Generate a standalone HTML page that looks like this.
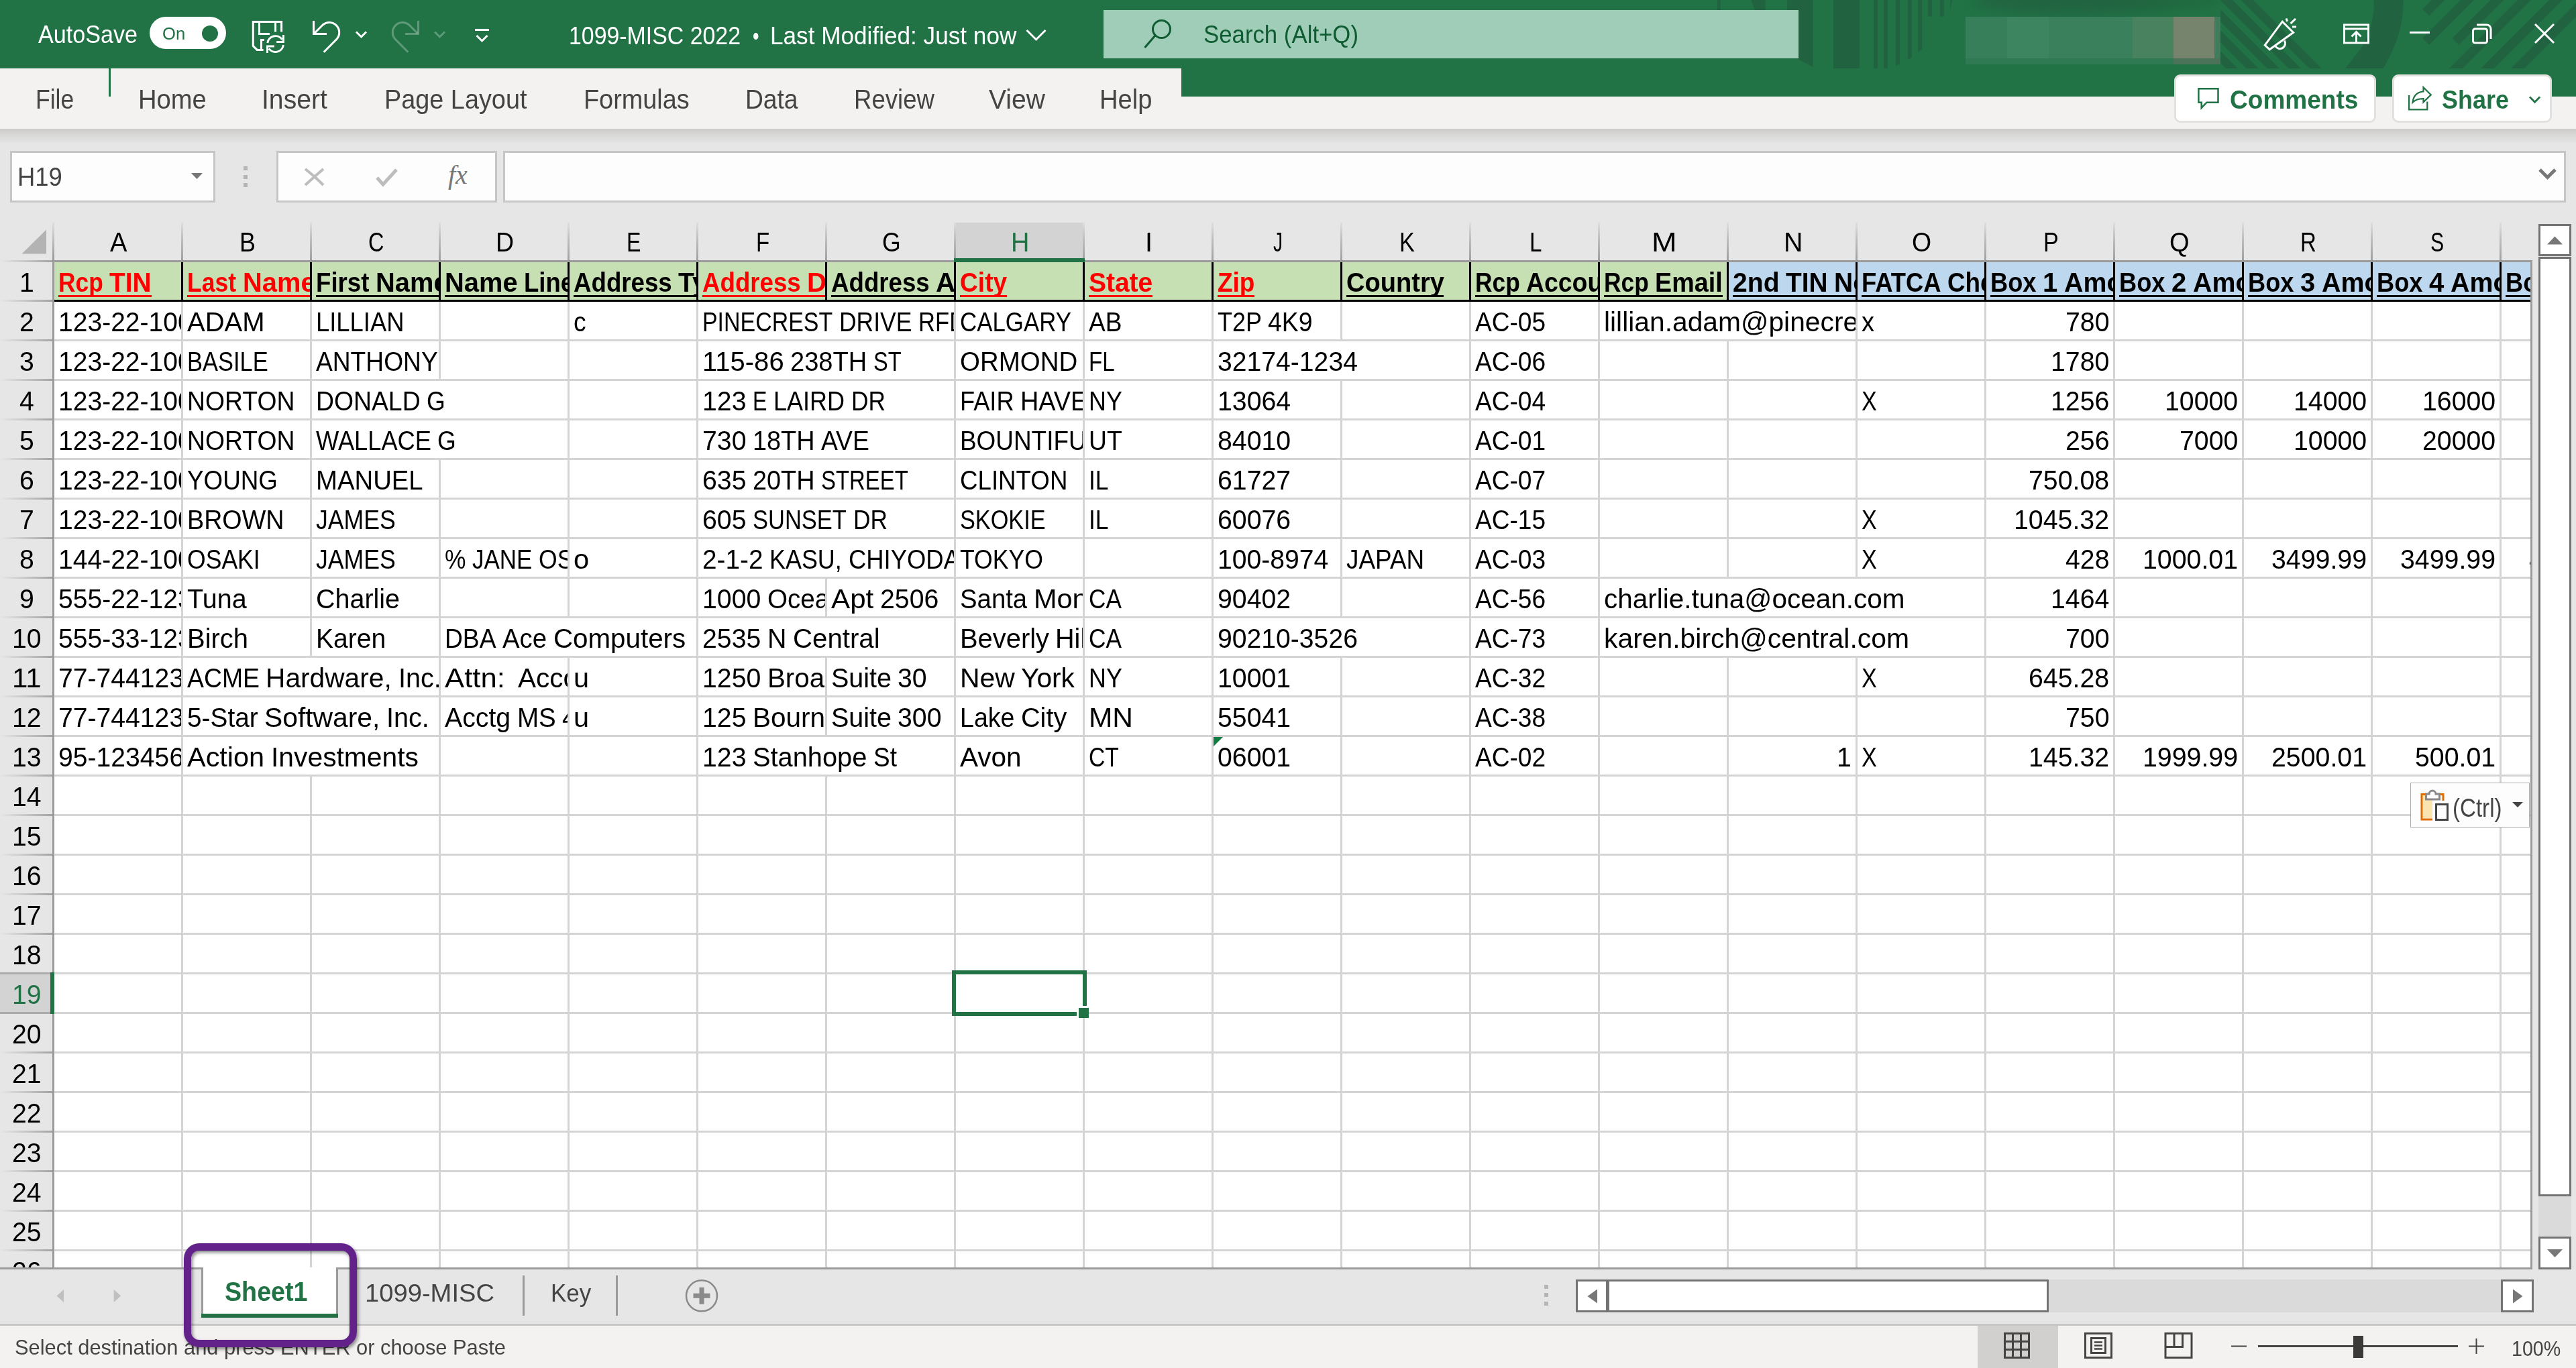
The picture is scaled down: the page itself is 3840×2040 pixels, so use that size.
<!DOCTYPE html>
<html><head><meta charset="utf-8"><title>Excel</title>
<style>
html,body{margin:0;padding:0;}
body{width:3840px;height:2040px;overflow:hidden;position:relative;background:#e6e6e6;font-family:"Liberation Sans",sans-serif;}
div,span,svg{position:absolute;box-sizing:border-box;}
.t{white-space:pre;line-height:1;transform-origin:0 0;display:block;}
.c{overflow:hidden;}
.u{text-decoration:underline;text-decoration-thickness:3px;text-underline-offset:5px;text-decoration-skip-ink:none;}
</style></head><body>

<div style="left:0px;top:0px;width:3840px;height:102px;background:#217346;"></div>
<div style="left:1761px;top:102px;width:2079px;height:42px;background:#217346;"></div>
<div style="left:0px;top:102px;width:1761px;height:90px;background:#f3f2f1;"></div>
<div style="left:1761px;top:144px;width:2079px;height:48px;background:#f3f2f1;"></div>
<div style="left:0px;top:192px;width:3840px;height:23px;background:linear-gradient(#cccbca,#d8d8d7 40%,#e6e6e6);"></div>
<div style="left:2940px;top:-22px;width:300px;height:44px;background:#216140;filter:blur(10px);border-radius:50%;opacity:.8"></div>
<div style="left:3180px;top:-18px;width:130px;height:34px;background:#21673f;filter:blur(9px);border-radius:50%;opacity:.7"></div>
<svg style="left:0;top:0" width="3840" height="102" viewBox="0 0 3840 102">
<g fill="#216341">
<rect x="2560" y="0" width="4.7" height="15"/>
<polygon points="2610.2,0 2631.5,0 2631.5,15 2616,15"/>
<polygon points="2664.2,0 2702.6,0 2702.6,100 2681,88.6 2681,15 2664.2,15"/>
<rect x="2733" y="0" width="39" height="102"/>
<rect x="2793" y="0" width="6" height="102"/><rect x="2808" y="0" width="6" height="102"/>
<polygon points="2826,0 2832,0 2832,95 2826,98.6"/>
<polygon points="2844,0 2850,0 2850,85.5 2844,89"/>
<polygon points="2859,0 2865,0 2865,73.5 2859,78"/>
<rect x="2874" y="0" width="6" height="24.5"/><rect x="2892" y="0" width="6" height="24.5"/>
<polygon points="2907,0 2910,0 2907,17"/>
</g>
<clipPath id="cpa"><rect x="3310" y="0" width="530" height="102"/></clipPath>
<g clip-path="url(#cpa)" stroke="#216341" fill="none">
<path d="M3315.8,122 L3173.8,-20" stroke-width="12.7"/>
<path d="M3346.8,122 L3204.8,-20" stroke-width="12.7"/>
<path d="M3377.7,122 L3235.7,-20" stroke-width="12.7"/>
<path d="M3408.7,122 L3266.7,-20" stroke-width="12.7"/>
<path d="M3440.7,122 L3298.7,-20" stroke-width="12.7"/>
<path d="M3471.6,122 L3329.6,-20" stroke-width="12.7"/>
<path d="M3538.7,0 Q3540,36 3520.6,70.5 L3496,102 L3552.6,102 Q3584,50 3582.5,0 Z" fill="#216341" stroke="none"/>
<path d="M3616,18.6 L3656,-21.4" stroke-width="14.1"/>
<path d="M3616,62 L3698,-20" stroke-width="14.1"/>
<path d="M3660.4,62 L3742.4,-20" stroke-width="14.1"/>
<path d="M3640.9,122 L3782.9,-20" stroke-width="14.1"/>
<path d="M3687.9,122 L3829.9,-20" stroke-width="14.1"/>
<path d="M3733,122 L3875,-20" stroke-width="14.1"/>
</g></svg>
<div style="left:2930px;top:25px;width:380px;height:71px;background:#2e7a54;"></div>
<div style="left:2930px;top:25px;width:62px;height:62px;background:#377f5a;"></div>
<div style="left:2992px;top:25px;width:62.4px;height:62px;background:#3d8560;"></div>
<div style="left:3054.4px;top:25px;width:124.2px;height:62px;background:#3b805c;"></div>
<div style="left:3178.6px;top:25px;width:61.4px;height:62px;background:#48825f;"></div>
<div style="left:2930px;top:87px;width:310px;height:9px;background:#2f7a53;"></div>
<div style="left:3240px;top:25px;width:61px;height:71px;background:#76836d;"></div>
<div style="left:3301px;top:25px;width:9px;height:71px;background:#3f7d5c;"></div>
<div style="left:3240px;top:87px;width:70px;height:9px;background:#4a735a;"></div>
<span class="t" style="left:57.00px;top:33.41px;font-size:37.79px;color:#fff;transform:scaleX(0.9032);">AutoSave</span>
<div style="left:223px;top:25px;width:114px;height:48px;background:#fff;border-radius:24px;"></div>
<div style="left:301px;top:37.5px;width:24px;height:24px;background:#217346;border-radius:12px;"></div>
<span class="t" style="left:241.80px;top:37.45px;font-size:26.16px;color:#217346;transform:scaleX(0.9799);">On</span>
<span class="t" style="left:848.30px;top:35.10px;font-size:37.21px;color:#fff;transform:scaleX(0.9101);">1099-MISC 2022</span>
<span class="t" style="left:1121.50px;top:35.10px;font-size:37.21px;color:#fff;transform:scaleX(0.7295);">•</span>
<span class="t" style="left:1147.50px;top:35.10px;font-size:37.21px;color:#fff;transform:scaleX(0.9449);">Last Modified: Just now</span>
<div style="left:1645px;top:15px;width:1036px;height:72px;background:#9fcdb7;"></div>
<span class="t" style="left:1794.30px;top:33.23px;font-size:37.06px;color:#0f5c32;transform:scaleX(0.9389);">Search (Alt+Q)</span>
<svg style="left:0;top:0" width="3840" height="220" viewBox="0 0 3840 220" fill="none" stroke="#fff" stroke-width="3">
<path d="M419.6,47.6 V32.5 H377.3 V68.6 L383.3,74.4 H392.6"/><path d="M410.6,32.5 V47.6"/><path d="M386.5,32.5 V50.4 H402"/><path d="M393.9,59.4 H389.5 V74.4"/>
<path d="M398.8,64 A11.9,11.9 0 0 1 420.4,58.8"/><path d="M422.4,67 A11.9,11.9 0 0 1 400.8,72.3"/><path d="M422.4,52 V62.4 H412.2"/><path d="M398.5,79 V68.9 H409"/>
<path d="M467.5,31 V50.4 H487"/><path d="M468.5,49.7 L481.2,37 A14.9,14.9 0 0 1 502.2,58 L482.7,77.8"/>
<path d="M531,47.5 L538.5,55 L546,47.5"/>
<g stroke="rgba(255,255,255,.28)"><path d="M623.5,31 V50.4 H604"/><path d="M622.5,49.7 L609.8,37 A14.9,14.9 0 0 0 588.8,58 L608.3,77.8"/><path d="M648,47.5 L655.5,55 L663,47.5"/></g>
<path d="M708,44.5 H729"/><path d="M710.5,53 L718.5,61 L726.5,53"/>
<path d="M1530.5,45 L1544.5,59 L1558.5,45"/>
<g stroke="#0f5c32"><circle cx="1731.5" cy="43.5" r="13"/><path d="M1722,53 L1706.5,71"/></g>
<path d="M3376.2,67.3 L3402.3,32.2 L3418.6,48.5 L3383.3,73.8 Z"/><path d="M3405.3,60.5 A7.6,7.6 0 0 1 3392,69"/><path d="M3408,27.5 L3409.6,32"/><path d="M3414.5,35.2 L3422,28"/><path d="M3417,40 L3423,40"/>
<rect x="3494.5" y="37" width="36" height="27"/><path d="M3494,43 H3531"/><path d="M3512.5,63 V48"/><path d="M3505.5,54.5 L3512.5,47.5 L3519.5,54.5"/>
<path d="M3592,48.5 H3622"/>
<rect x="3686.5" y="43" width="21" height="21" rx="3"/><path d="M3692,37 H3707 A6,6 0 0 1 3713,43 V58"/>
<path d="M3779,36 L3807,64 M3807,36 L3779,64"/>
</svg>
<span class="t" style="left:52.70px;top:128.05px;font-size:40.70px;color:#444;transform:scaleX(0.8740);">File</span>
<span class="t" style="left:205.60px;top:128.05px;font-size:40.70px;color:#444;transform:scaleX(0.9385);">Home</span>
<span class="t" style="left:390.30px;top:128.05px;font-size:40.70px;color:#444;transform:scaleX(0.9618);">Insert</span>
<span class="t" style="left:573.00px;top:128.05px;font-size:40.70px;color:#444;transform:scaleX(0.9297);">Page Layout</span>
<span class="t" style="left:870.00px;top:128.05px;font-size:40.70px;color:#444;transform:scaleX(0.9303);">Formulas</span>
<span class="t" style="left:1111.00px;top:128.05px;font-size:40.70px;color:#444;transform:scaleX(0.9140);">Data</span>
<span class="t" style="left:1273.00px;top:128.05px;font-size:40.70px;color:#444;transform:scaleX(0.8984);">Review</span>
<span class="t" style="left:1474.00px;top:128.05px;font-size:40.70px;color:#444;transform:scaleX(0.9591);">View</span>
<span class="t" style="left:1639.00px;top:128.05px;font-size:40.70px;color:#444;transform:scaleX(0.9389);">Help</span>
<div style="left:162px;top:102px;width:3px;height:42px;background:#217346;"></div>
<div style="left:3240.5px;top:111px;width:301.5px;height:72px;background:#fff;border:3px solid #e3e1df;border-radius:9px;"></div>
<div style="left:3566px;top:111px;width:237.5px;height:72px;background:#fff;border:3px solid #e3e1df;border-radius:9px;"></div>
<span class="t" style="left:3323.50px;top:130.07px;font-size:38.66px;color:#217346;transform:scaleX(0.9584);font-weight:bold;">Comments</span>
<span class="t" style="left:3639.50px;top:130.07px;font-size:38.66px;color:#217346;transform:scaleX(0.9298);font-weight:bold;">Share</span>
<svg style="left:0;top:0" width="3840" height="220" viewBox="0 0 3840 220" fill="none" stroke="#217346" stroke-width="2.5">
<path d="M3277.4,132.2 H3306.5 V152.7 H3289.5 L3281.7,160.8 V152.7 H3277.4 Z"/>
<path d="M3591.1,142 V163.4 H3618.3 V151.5" stroke-width="2.3"/>
<path d="M3596.5,152.8 Q3598,138 3612.5,136.4 V130.1 L3623.8,141.4 L3612.5,152.3 V147.1 Q3602,147 3596.5,152.8 Z" stroke-width="2.2"/>
<path d="M3771,144.5 L3778.6,152.2 L3786.2,144.5" stroke-width="2.8"/>
</svg>
<div style="left:15px;top:225px;width:306px;height:77px;background:#fdfdfd;border:3px solid #c6c6c6;"></div>
<span class="t" style="left:26.40px;top:245.12px;font-size:38.37px;color:#444;transform:scaleX(0.9492);">H19</span>
<div style="left:411.5px;top:225px;width:329.5px;height:77px;background:#fdfdfd;border:3px solid #c6c6c6;"></div>
<div style="left:750px;top:225px;width:3075px;height:77px;background:#fdfdfd;border:3px solid #c6c6c6;"></div>
<div style="left:363px;top:248px;width:6px;height:6px;background:#b5b5b5;"></div>
<div style="left:363px;top:260.5px;width:6px;height:6px;background:#b5b5b5;"></div>
<div style="left:363px;top:272.5px;width:6px;height:6px;background:#b5b5b5;"></div>
<svg style="left:0;top:200" width="3840" height="120" viewBox="0 200 3840 120" fill="none">
<polygon points="285,258 302,258 293.5,267" fill="#777"/>
<path d="M455,252 Q468,262 482,276 M482,252 Q468,264 455,276" stroke="#bdbdbd" stroke-width="4"/>
<path d="M562,265 L571,275 L591,253" stroke="#bdbdbd" stroke-width="5"/>
<path d="M3786,253 L3797.5,264.5 L3809,253" stroke="#777" stroke-width="5"/>
</svg>
<span class="t" style="left:668px;top:240.5px;font-family:'Liberation Serif',serif;font-style:italic;font-size:40px;color:#777;">fx</span>
<svg style="left:0;top:330" width="120" height="60" viewBox="0 330 120 60"><polygon points="69,342.5 69,378.5 32.5,378.5" fill="#b3b3b3"/></svg>
<div style="left:1422px;top:332px;width:195px;height:54px;background:#d3d3d3;"></div>
<div style="left:78px;top:332px;width:3px;height:57px;background:linear-gradient(#dedede,#bdbdbd 45%,#a0a0a0);"></div>
<div style="left:270px;top:332px;width:3px;height:57px;background:linear-gradient(#dedede,#bdbdbd 45%,#a0a0a0);"></div>
<div style="left:462px;top:332px;width:3px;height:57px;background:linear-gradient(#dedede,#bdbdbd 45%,#a0a0a0);"></div>
<div style="left:654px;top:332px;width:3px;height:57px;background:linear-gradient(#dedede,#bdbdbd 45%,#a0a0a0);"></div>
<div style="left:846px;top:332px;width:3px;height:57px;background:linear-gradient(#dedede,#bdbdbd 45%,#a0a0a0);"></div>
<div style="left:1038px;top:332px;width:3px;height:57px;background:linear-gradient(#dedede,#bdbdbd 45%,#a0a0a0);"></div>
<div style="left:1230px;top:332px;width:3px;height:57px;background:linear-gradient(#dedede,#bdbdbd 45%,#a0a0a0);"></div>
<div style="left:1422px;top:332px;width:3px;height:57px;background:linear-gradient(#dedede,#bdbdbd 45%,#a0a0a0);"></div>
<div style="left:1614px;top:332px;width:3px;height:57px;background:linear-gradient(#dedede,#bdbdbd 45%,#a0a0a0);"></div>
<div style="left:1806px;top:332px;width:3px;height:57px;background:linear-gradient(#dedede,#bdbdbd 45%,#a0a0a0);"></div>
<div style="left:1998px;top:332px;width:3px;height:57px;background:linear-gradient(#dedede,#bdbdbd 45%,#a0a0a0);"></div>
<div style="left:2190px;top:332px;width:3px;height:57px;background:linear-gradient(#dedede,#bdbdbd 45%,#a0a0a0);"></div>
<div style="left:2382px;top:332px;width:3px;height:57px;background:linear-gradient(#dedede,#bdbdbd 45%,#a0a0a0);"></div>
<div style="left:2574px;top:332px;width:3px;height:57px;background:linear-gradient(#dedede,#bdbdbd 45%,#a0a0a0);"></div>
<div style="left:2766px;top:332px;width:3px;height:57px;background:linear-gradient(#dedede,#bdbdbd 45%,#a0a0a0);"></div>
<div style="left:2958px;top:332px;width:3px;height:57px;background:linear-gradient(#dedede,#bdbdbd 45%,#a0a0a0);"></div>
<div style="left:3150px;top:332px;width:3px;height:57px;background:linear-gradient(#dedede,#bdbdbd 45%,#a0a0a0);"></div>
<div style="left:3342px;top:332px;width:3px;height:57px;background:linear-gradient(#dedede,#bdbdbd 45%,#a0a0a0);"></div>
<div style="left:3534px;top:332px;width:3px;height:57px;background:linear-gradient(#dedede,#bdbdbd 45%,#a0a0a0);"></div>
<div style="left:3726px;top:332px;width:3px;height:57px;background:linear-gradient(#dedede,#bdbdbd 45%,#a0a0a0);"></div>
<span class="t" style="left:164.26px;top:341.05px;font-size:40.70px;color:#000;transform:scaleX(0.9385);">A</span>
<span class="t" style="left:357.03px;top:341.05px;font-size:40.70px;color:#000;transform:scaleX(0.8818);">B</span>
<span class="t" style="left:549.28px;top:341.05px;font-size:40.70px;color:#000;transform:scaleX(0.7979);">C</span>
<span class="t" style="left:739.47px;top:341.05px;font-size:40.70px;color:#000;transform:scaleX(0.9207);">D</span>
<span class="t" style="left:934.26px;top:341.05px;font-size:40.70px;color:#000;transform:scaleX(0.7910);">E</span>
<span class="t" style="left:1126.90px;top:341.05px;font-size:40.70px;color:#000;transform:scaleX(0.8124);">F</span>
<span class="t" style="left:1315.11px;top:341.05px;font-size:40.70px;color:#000;transform:scaleX(0.8771);">G</span>
<span class="t" style="left:1507.30px;top:341.05px;font-size:40.70px;color:#217346;transform:scaleX(0.9327);">H</span>
<span class="t" style="left:1707.45px;top:341.05px;font-size:40.70px;color:#000;transform:scaleX(0.9806);">I</span>
<span class="t" style="left:1897.98px;top:341.05px;font-size:40.70px;color:#000;transform:scaleX(0.6898);">J</span>
<span class="t" style="left:2085.56px;top:341.05px;font-size:40.70px;color:#000;transform:scaleX(0.8429);">K</span>
<span class="t" style="left:2279.76px;top:341.05px;font-size:40.70px;color:#000;transform:scaleX(0.8165);">L</span>
<span class="t" style="left:2462.19px;top:341.05px;font-size:40.70px;color:#000;transform:scaleX(1.1097);">M</span>
<span class="t" style="left:2658.79px;top:341.05px;font-size:40.70px;color:#000;transform:scaleX(0.9671);">N</span>
<span class="t" style="left:2850.43px;top:341.05px;font-size:40.70px;color:#000;transform:scaleX(0.9201);">O</span>
<span class="t" style="left:3045.63px;top:341.05px;font-size:40.70px;color:#000;transform:scaleX(0.8380);">P</span>
<span class="t" style="left:3234.19px;top:341.05px;font-size:40.70px;color:#000;transform:scaleX(0.9354);">Q</span>
<span class="t" style="left:3429.06px;top:341.05px;font-size:40.70px;color:#000;transform:scaleX(0.8129);">R</span>
<span class="t" style="left:3622.90px;top:341.05px;font-size:40.70px;color:#000;transform:scaleX(0.7440);">S</span>
<div style="left:81px;top:391px;width:3691px;height:1499px;background:#fff;"></div>
<div style="left:81px;top:391px;width:2494px;height:57px;background:#c6e0b4;"></div>
<div style="left:2575px;top:391px;width:1197px;height:57px;background:#bdd7ee;"></div>
<div style="left:270px;top:450px;width:3px;height:1440px;background:#d4d4d4;"></div>
<div style="left:462px;top:450px;width:3px;height:1440px;background:#d4d4d4;"></div>
<div style="left:654px;top:450px;width:3px;height:1440px;background:#d4d4d4;"></div>
<div style="left:846px;top:450px;width:3px;height:1440px;background:#d4d4d4;"></div>
<div style="left:1038px;top:450px;width:3px;height:1440px;background:#d4d4d4;"></div>
<div style="left:1230px;top:450px;width:3px;height:1440px;background:#d4d4d4;"></div>
<div style="left:1422px;top:450px;width:3px;height:1440px;background:#d4d4d4;"></div>
<div style="left:1614px;top:450px;width:3px;height:1440px;background:#d4d4d4;"></div>
<div style="left:1806px;top:450px;width:3px;height:1440px;background:#d4d4d4;"></div>
<div style="left:1998px;top:450px;width:3px;height:1440px;background:#d4d4d4;"></div>
<div style="left:2190px;top:450px;width:3px;height:1440px;background:#d4d4d4;"></div>
<div style="left:2382px;top:450px;width:3px;height:1440px;background:#d4d4d4;"></div>
<div style="left:2574px;top:450px;width:3px;height:1440px;background:#d4d4d4;"></div>
<div style="left:2766px;top:450px;width:3px;height:1440px;background:#d4d4d4;"></div>
<div style="left:2958px;top:450px;width:3px;height:1440px;background:#d4d4d4;"></div>
<div style="left:3150px;top:450px;width:3px;height:1440px;background:#d4d4d4;"></div>
<div style="left:3342px;top:450px;width:3px;height:1440px;background:#d4d4d4;"></div>
<div style="left:3534px;top:450px;width:3px;height:1440px;background:#d4d4d4;"></div>
<div style="left:3726px;top:450px;width:3px;height:1440px;background:#d4d4d4;"></div>
<div style="left:81px;top:506px;width:3691px;height:3px;background:#d4d4d4;"></div>
<div style="left:81px;top:565px;width:3691px;height:3px;background:#d4d4d4;"></div>
<div style="left:81px;top:624px;width:3691px;height:3px;background:#d4d4d4;"></div>
<div style="left:81px;top:683px;width:3691px;height:3px;background:#d4d4d4;"></div>
<div style="left:81px;top:742px;width:3691px;height:3px;background:#d4d4d4;"></div>
<div style="left:81px;top:801px;width:3691px;height:3px;background:#d4d4d4;"></div>
<div style="left:81px;top:860px;width:3691px;height:3px;background:#d4d4d4;"></div>
<div style="left:81px;top:919px;width:3691px;height:3px;background:#d4d4d4;"></div>
<div style="left:81px;top:978px;width:3691px;height:3px;background:#d4d4d4;"></div>
<div style="left:81px;top:1037px;width:3691px;height:3px;background:#d4d4d4;"></div>
<div style="left:81px;top:1096px;width:3691px;height:3px;background:#d4d4d4;"></div>
<div style="left:81px;top:1155px;width:3691px;height:3px;background:#d4d4d4;"></div>
<div style="left:81px;top:1214px;width:3691px;height:3px;background:#d4d4d4;"></div>
<div style="left:81px;top:1273px;width:3691px;height:3px;background:#d4d4d4;"></div>
<div style="left:81px;top:1332px;width:3691px;height:3px;background:#d4d4d4;"></div>
<div style="left:81px;top:1391px;width:3691px;height:3px;background:#d4d4d4;"></div>
<div style="left:81px;top:1450px;width:3691px;height:3px;background:#d4d4d4;"></div>
<div style="left:81px;top:1509px;width:3691px;height:3px;background:#d4d4d4;"></div>
<div style="left:81px;top:1568px;width:3691px;height:3px;background:#d4d4d4;"></div>
<div style="left:81px;top:1627px;width:3691px;height:3px;background:#d4d4d4;"></div>
<div style="left:81px;top:1686px;width:3691px;height:3px;background:#d4d4d4;"></div>
<div style="left:81px;top:1745px;width:3691px;height:3px;background:#d4d4d4;"></div>
<div style="left:81px;top:1804px;width:3691px;height:3px;background:#d4d4d4;"></div>
<div style="left:81px;top:1863px;width:3691px;height:3px;background:#d4d4d4;"></div>
<div style="left:1230px;top:450px;width:3px;height:56px;background:#fff;"></div>
<div style="left:2574px;top:450px;width:3px;height:56px;background:#fff;"></div>
<div style="left:1230px;top:509px;width:3px;height:56px;background:#fff;"></div>
<div style="left:1998px;top:509px;width:3px;height:56px;background:#fff;"></div>
<div style="left:654px;top:568px;width:3px;height:56px;background:#fff;"></div>
<div style="left:1230px;top:568px;width:3px;height:56px;background:#fff;"></div>
<div style="left:654px;top:627px;width:3px;height:56px;background:#fff;"></div>
<div style="left:1230px;top:627px;width:3px;height:56px;background:#fff;"></div>
<div style="left:1230px;top:686px;width:3px;height:56px;background:#fff;"></div>
<div style="left:1230px;top:745px;width:3px;height:56px;background:#fff;"></div>
<div style="left:1230px;top:804px;width:3px;height:56px;background:#fff;"></div>
<div style="left:2574px;top:863px;width:3px;height:56px;background:#fff;"></div>
<div style="left:2766px;top:863px;width:3px;height:56px;background:#fff;"></div>
<div style="left:846px;top:922px;width:3px;height:56px;background:#fff;"></div>
<div style="left:1230px;top:922px;width:3px;height:56px;background:#fff;"></div>
<div style="left:1998px;top:922px;width:3px;height:56px;background:#fff;"></div>
<div style="left:2574px;top:922px;width:3px;height:56px;background:#fff;"></div>
<div style="left:2766px;top:922px;width:3px;height:56px;background:#fff;"></div>
<div style="left:462px;top:981px;width:3px;height:56px;background:#fff;"></div>
<div style="left:462px;top:1040px;width:3px;height:56px;background:#fff;"></div>
<div style="left:462px;top:1099px;width:3px;height:56px;background:#fff;"></div>
<div style="left:1230px;top:1099px;width:3px;height:56px;background:#fff;"></div>
<div style="left:270px;top:391px;width:3px;height:59px;background:#000;"></div>
<div style="left:462px;top:391px;width:3px;height:59px;background:#000;"></div>
<div style="left:654px;top:391px;width:3px;height:59px;background:#000;"></div>
<div style="left:846px;top:391px;width:3px;height:59px;background:#000;"></div>
<div style="left:1038px;top:391px;width:3px;height:59px;background:#000;"></div>
<div style="left:1230px;top:391px;width:3px;height:59px;background:#000;"></div>
<div style="left:1422px;top:391px;width:3px;height:59px;background:#000;"></div>
<div style="left:1614px;top:391px;width:3px;height:59px;background:#000;"></div>
<div style="left:1806px;top:391px;width:3px;height:59px;background:#000;"></div>
<div style="left:1998px;top:391px;width:3px;height:59px;background:#000;"></div>
<div style="left:2190px;top:391px;width:3px;height:59px;background:#000;"></div>
<div style="left:2382px;top:391px;width:3px;height:59px;background:#000;"></div>
<div style="left:2574px;top:391px;width:3px;height:59px;background:#000;"></div>
<div style="left:2766px;top:391px;width:3px;height:59px;background:#000;"></div>
<div style="left:2958px;top:391px;width:3px;height:59px;background:#000;"></div>
<div style="left:3150px;top:391px;width:3px;height:59px;background:#000;"></div>
<div style="left:3342px;top:391px;width:3px;height:59px;background:#000;"></div>
<div style="left:3534px;top:391px;width:3px;height:59px;background:#000;"></div>
<div style="left:3726px;top:391px;width:3px;height:59px;background:#000;"></div>
<div style="left:81px;top:447px;width:3691px;height:3px;background:#000;"></div>
<div style="left:78px;top:388px;width:3697px;height:3px;background:#9b9b9b;"></div>
<div style="left:1422px;top:385px;width:195px;height:6px;background:#217346;"></div>
<div style="left:0px;top:1453px;width:75px;height:56px;background:#d3d3d3;"></div>
<div style="left:0px;top:388px;width:78px;height:3px;background:linear-gradient(90deg,rgba(171,171,171,0),rgba(171,171,171,.55) 50%,#a3a3a3);"></div>
<div style="left:0px;top:447px;width:78px;height:3px;background:linear-gradient(90deg,rgba(171,171,171,0),rgba(171,171,171,.55) 50%,#a3a3a3);"></div>
<div style="left:0px;top:506px;width:78px;height:3px;background:linear-gradient(90deg,rgba(171,171,171,0),rgba(171,171,171,.55) 50%,#a3a3a3);"></div>
<div style="left:0px;top:565px;width:78px;height:3px;background:linear-gradient(90deg,rgba(171,171,171,0),rgba(171,171,171,.55) 50%,#a3a3a3);"></div>
<div style="left:0px;top:624px;width:78px;height:3px;background:linear-gradient(90deg,rgba(171,171,171,0),rgba(171,171,171,.55) 50%,#a3a3a3);"></div>
<div style="left:0px;top:683px;width:78px;height:3px;background:linear-gradient(90deg,rgba(171,171,171,0),rgba(171,171,171,.55) 50%,#a3a3a3);"></div>
<div style="left:0px;top:742px;width:78px;height:3px;background:linear-gradient(90deg,rgba(171,171,171,0),rgba(171,171,171,.55) 50%,#a3a3a3);"></div>
<div style="left:0px;top:801px;width:78px;height:3px;background:linear-gradient(90deg,rgba(171,171,171,0),rgba(171,171,171,.55) 50%,#a3a3a3);"></div>
<div style="left:0px;top:860px;width:78px;height:3px;background:linear-gradient(90deg,rgba(171,171,171,0),rgba(171,171,171,.55) 50%,#a3a3a3);"></div>
<div style="left:0px;top:919px;width:78px;height:3px;background:linear-gradient(90deg,rgba(171,171,171,0),rgba(171,171,171,.55) 50%,#a3a3a3);"></div>
<div style="left:0px;top:978px;width:78px;height:3px;background:linear-gradient(90deg,rgba(171,171,171,0),rgba(171,171,171,.55) 50%,#a3a3a3);"></div>
<div style="left:0px;top:1037px;width:78px;height:3px;background:linear-gradient(90deg,rgba(171,171,171,0),rgba(171,171,171,.55) 50%,#a3a3a3);"></div>
<div style="left:0px;top:1096px;width:78px;height:3px;background:linear-gradient(90deg,rgba(171,171,171,0),rgba(171,171,171,.55) 50%,#a3a3a3);"></div>
<div style="left:0px;top:1155px;width:78px;height:3px;background:linear-gradient(90deg,rgba(171,171,171,0),rgba(171,171,171,.55) 50%,#a3a3a3);"></div>
<div style="left:0px;top:1214px;width:78px;height:3px;background:linear-gradient(90deg,rgba(171,171,171,0),rgba(171,171,171,.55) 50%,#a3a3a3);"></div>
<div style="left:0px;top:1273px;width:78px;height:3px;background:linear-gradient(90deg,rgba(171,171,171,0),rgba(171,171,171,.55) 50%,#a3a3a3);"></div>
<div style="left:0px;top:1332px;width:78px;height:3px;background:linear-gradient(90deg,rgba(171,171,171,0),rgba(171,171,171,.55) 50%,#a3a3a3);"></div>
<div style="left:0px;top:1391px;width:78px;height:3px;background:linear-gradient(90deg,rgba(171,171,171,0),rgba(171,171,171,.55) 50%,#a3a3a3);"></div>
<div style="left:0px;top:1450px;width:78px;height:3px;background:linear-gradient(90deg,rgba(171,171,171,0),rgba(171,171,171,.55) 50%,#a3a3a3);"></div>
<div style="left:0px;top:1509px;width:78px;height:3px;background:linear-gradient(90deg,rgba(171,171,171,0),rgba(171,171,171,.55) 50%,#a3a3a3);"></div>
<div style="left:0px;top:1568px;width:78px;height:3px;background:linear-gradient(90deg,rgba(171,171,171,0),rgba(171,171,171,.55) 50%,#a3a3a3);"></div>
<div style="left:0px;top:1627px;width:78px;height:3px;background:linear-gradient(90deg,rgba(171,171,171,0),rgba(171,171,171,.55) 50%,#a3a3a3);"></div>
<div style="left:0px;top:1686px;width:78px;height:3px;background:linear-gradient(90deg,rgba(171,171,171,0),rgba(171,171,171,.55) 50%,#a3a3a3);"></div>
<div style="left:0px;top:1745px;width:78px;height:3px;background:linear-gradient(90deg,rgba(171,171,171,0),rgba(171,171,171,.55) 50%,#a3a3a3);"></div>
<div style="left:0px;top:1804px;width:78px;height:3px;background:linear-gradient(90deg,rgba(171,171,171,0),rgba(171,171,171,.55) 50%,#a3a3a3);"></div>
<div style="left:0px;top:1863px;width:78px;height:3px;background:linear-gradient(90deg,rgba(171,171,171,0),rgba(171,171,171,.55) 50%,#a3a3a3);"></div>
<div style="left:78px;top:332px;width:3px;height:1558px;background:#9b9b9b;background:linear-gradient(#dedede,#a0a0a0 50px,#9b9b9b 60px);"></div>
<div style="left:0px;top:1450px;width:78px;height:3px;background:#ababab;"></div>
<div style="left:0px;top:1509px;width:78px;height:3px;background:#ababab;"></div>
<div style="left:75px;top:1450px;width:6px;height:62px;background:#217346;"></div>
<span class="t" style="left:29.29px;top:400.55px;font-size:40.70px;color:#000;transform:scaleX(0.9642);">1</span>
<span class="t" style="left:29.29px;top:459.55px;font-size:40.70px;color:#000;transform:scaleX(0.9642);">2</span>
<span class="t" style="left:29.29px;top:518.55px;font-size:40.70px;color:#000;transform:scaleX(0.9642);">3</span>
<span class="t" style="left:29.29px;top:577.55px;font-size:40.70px;color:#000;transform:scaleX(0.9642);">4</span>
<span class="t" style="left:29.29px;top:636.55px;font-size:40.70px;color:#000;transform:scaleX(0.9642);">5</span>
<span class="t" style="left:29.29px;top:695.55px;font-size:40.70px;color:#000;transform:scaleX(0.9642);">6</span>
<span class="t" style="left:29.29px;top:754.55px;font-size:40.70px;color:#000;transform:scaleX(0.9642);">7</span>
<span class="t" style="left:29.29px;top:813.55px;font-size:40.70px;color:#000;transform:scaleX(0.9642);">8</span>
<span class="t" style="left:29.29px;top:872.55px;font-size:40.70px;color:#000;transform:scaleX(0.9642);">9</span>
<span class="t" style="left:18.38px;top:931.55px;font-size:40.70px;color:#000;transform:scaleX(0.9642);">10</span>
<span class="t" style="left:18.38px;top:990.55px;font-size:40.70px;color:#000;transform:scaleX(1.0331);">11</span>
<span class="t" style="left:18.38px;top:1049.55px;font-size:40.70px;color:#000;transform:scaleX(0.9642);">12</span>
<span class="t" style="left:18.38px;top:1108.55px;font-size:40.70px;color:#000;transform:scaleX(0.9642);">13</span>
<span class="t" style="left:18.38px;top:1167.55px;font-size:40.70px;color:#000;transform:scaleX(0.9642);">14</span>
<span class="t" style="left:18.38px;top:1226.55px;font-size:40.70px;color:#000;transform:scaleX(0.9642);">15</span>
<span class="t" style="left:18.38px;top:1285.55px;font-size:40.70px;color:#000;transform:scaleX(0.9642);">16</span>
<span class="t" style="left:18.38px;top:1344.55px;font-size:40.70px;color:#000;transform:scaleX(0.9642);">17</span>
<span class="t" style="left:18.38px;top:1403.55px;font-size:40.70px;color:#000;transform:scaleX(0.9642);">18</span>
<span class="t" style="left:18.38px;top:1462.55px;font-size:40.70px;color:#217346;transform:scaleX(0.9642);">19</span>
<span class="t" style="left:18.38px;top:1521.55px;font-size:40.70px;color:#000;transform:scaleX(0.9642);">20</span>
<span class="t" style="left:18.38px;top:1580.55px;font-size:40.70px;color:#000;transform:scaleX(0.9642);">21</span>
<span class="t" style="left:18.38px;top:1639.55px;font-size:40.70px;color:#000;transform:scaleX(0.9642);">22</span>
<span class="t" style="left:18.38px;top:1698.55px;font-size:40.70px;color:#000;transform:scaleX(0.9642);">23</span>
<span class="t" style="left:18.38px;top:1757.55px;font-size:40.70px;color:#000;transform:scaleX(0.9642);">24</span>
<span class="t" style="left:18.38px;top:1816.55px;font-size:40.70px;color:#000;transform:scaleX(0.9642);">25</span>
<span class="t" style="left:18.38px;top:1875.55px;font-size:40.70px;color:#000;transform:scaleX(0.9642);">26</span>
<div class="c" style="left:81px;top:391px;width:189px;height:56px;"><span class="t" style="left:5.50px;top:9.55px;font-size:40.70px;color:#ff0000;transform:scaleX(0.8687);font-weight:bold;">Rcp</span><span class="t" style="left:82.24px;top:9.55px;font-size:40.70px;color:#ff0000;transform:scaleX(0.9537);font-weight:bold;">TIN</span><div style="left:5.50px;top:48.50px;width:139.26px;height:3px;background:#ff0000;"></div></div>
<div class="c" style="left:273px;top:391px;width:189px;height:56px;"><span class="t" style="left:5.50px;top:9.55px;font-size:40.70px;color:#ff0000;transform:scaleX(0.8744);font-weight:bold;">Last</span><span class="t" style="left:88.62px;top:9.55px;font-size:40.70px;color:#ff0000;transform:scaleX(0.9801);font-weight:bold;">Name</span><div style="left:5.50px;top:48.50px;width:191.75px;height:3px;background:#ff0000;"></div></div>
<div class="c" style="left:465px;top:391px;width:189px;height:56px;"><span class="t" style="left:5.50px;top:9.55px;font-size:40.70px;color:#000;transform:scaleX(0.9010);font-weight:bold;">First</span><span class="t" style="left:94.91px;top:9.55px;font-size:40.70px;color:#000;transform:scaleX(0.9801);font-weight:bold;">Name</span><div style="left:5.50px;top:48.50px;width:198.04px;height:3px;background:#000;"></div></div>
<div class="c" style="left:657px;top:391px;width:189px;height:56px;"><span class="t" style="left:5.50px;top:9.55px;font-size:40.70px;color:#000;transform:scaleX(0.9801);font-weight:bold;">Name</span><span class="t" style="left:124.08px;top:9.55px;font-size:40.70px;color:#000;transform:scaleX(0.8988);font-weight:bold;">Line</span><div style="left:5.50px;top:48.50px;width:226.03px;height:3px;background:#000;"></div></div>
<div class="c" style="left:849px;top:391px;width:189px;height:56px;"><span class="t" style="left:5.50px;top:9.55px;font-size:40.70px;color:#000;transform:scaleX(0.9013);font-weight:bold;">Address</span><span class="t" style="left:162.23px;top:9.55px;font-size:40.70px;color:#000;transform:scaleX(0.9612);font-weight:bold;">Type</span><div style="left:5.50px;top:48.50px;width:245.12px;height:3px;background:#000;"></div></div>
<div class="c" style="left:1041px;top:391px;width:189px;height:56px;"><span class="t" style="left:5.50px;top:9.55px;font-size:40.70px;color:#ff0000;transform:scaleX(0.9013);font-weight:bold;">Address</span><span class="t" style="left:162.23px;top:9.55px;font-size:40.70px;color:#ff0000;transform:scaleX(0.9934);font-weight:bold;">Deliv/Street</span><div style="left:5.50px;top:48.50px;width:379.19px;height:3px;background:#ff0000;"></div></div>
<div class="c" style="left:1233px;top:391px;width:189px;height:56px;"><span class="t" style="left:5.50px;top:9.55px;font-size:40.70px;color:#000;transform:scaleX(0.9013);font-weight:bold;">Address</span><span class="t" style="left:162.23px;top:9.55px;font-size:40.70px;color:#000;transform:scaleX(0.9918);font-weight:bold;">Apt/Suite</span><div style="left:5.50px;top:48.50px;width:333.87px;height:3px;background:#000;"></div></div>
<div class="c" style="left:1425px;top:391px;width:189px;height:56px;"><span class="t" style="left:5.50px;top:9.55px;font-size:40.70px;color:#ff0000;transform:scaleX(0.9134);font-weight:bold;">City</span><div style="left:5.50px;top:48.50px;width:70.22px;height:3px;background:#ff0000;"></div></div>
<div class="c" style="left:1617px;top:391px;width:189px;height:56px;"><span class="t" style="left:5.50px;top:9.55px;font-size:40.70px;color:#ff0000;transform:scaleX(0.9568);font-weight:bold;">State</span><div style="left:5.50px;top:48.50px;width:95.22px;height:3px;background:#ff0000;"></div></div>
<div class="c" style="left:1809px;top:391px;width:189px;height:56px;"><span class="t" style="left:5.50px;top:9.55px;font-size:40.70px;color:#ff0000;transform:scaleX(0.9092);font-weight:bold;">Zip</span><div style="left:5.50px;top:48.50px;width:55.48px;height:3px;background:#ff0000;"></div></div>
<div class="c" style="left:2001px;top:391px;width:189px;height:56px;"><span class="t" style="left:5.50px;top:9.55px;font-size:40.70px;color:#000;transform:scaleX(0.9356);font-weight:bold;">Country</span><div style="left:5.50px;top:48.50px;width:145.95px;height:3px;background:#000;"></div></div>
<div class="c" style="left:2193px;top:391px;width:189px;height:56px;"><span class="t" style="left:5.50px;top:9.55px;font-size:40.70px;color:#000;transform:scaleX(0.8687);font-weight:bold;">Rcp</span><span class="t" style="left:82.24px;top:9.55px;font-size:40.70px;color:#000;transform:scaleX(0.9192);font-weight:bold;">Account</span><div style="left:5.50px;top:48.50px;width:226.38px;height:3px;background:#000;"></div></div>
<div class="c" style="left:2385px;top:391px;width:189px;height:56px;"><span class="t" style="left:5.50px;top:9.55px;font-size:40.70px;color:#000;transform:scaleX(0.8687);font-weight:bold;">Rcp</span><span class="t" style="left:82.24px;top:9.55px;font-size:40.70px;color:#000;transform:scaleX(0.9268);font-weight:bold;">Email</span><div style="left:5.50px;top:48.50px;width:177.36px;height:3px;background:#000;"></div></div>
<div class="c" style="left:2577px;top:391px;width:189px;height:56px;"><span class="t" style="left:5.50px;top:9.55px;font-size:40.70px;color:#000;transform:scaleX(0.9614);font-weight:bold;">2nd</span><span class="t" style="left:85.01px;top:9.55px;font-size:40.70px;color:#000;transform:scaleX(0.9537);font-weight:bold;">TIN</span><span class="t" style="left:157.48px;top:9.55px;font-size:40.70px;color:#000;transform:scaleX(0.9590);font-weight:bold;">Notice</span><div style="left:5.50px;top:48.50px;width:271.26px;height:3px;background:#000;"></div></div>
<div class="c" style="left:2769px;top:391px;width:189px;height:56px;"><span class="t" style="left:5.50px;top:9.55px;font-size:40.70px;color:#000;transform:scaleX(0.8941);font-weight:bold;">FATCA</span><span class="t" style="left:134.02px;top:9.55px;font-size:40.70px;color:#000;transform:scaleX(0.9051);font-weight:bold;">Checkbox</span><div style="left:5.50px;top:48.50px;width:304.57px;height:3px;background:#000;"></div></div>
<div class="c" style="left:2961px;top:391px;width:189px;height:56px;"><span class="t" style="left:5.50px;top:9.55px;font-size:40.70px;color:#000;transform:scaleX(0.8916);font-weight:bold;">Box</span><span class="t" style="left:84.00px;top:9.55px;font-size:40.70px;color:#000;transform:scaleX(0.9856);font-weight:bold;">1</span><span class="t" style="left:116.25px;top:9.55px;font-size:40.70px;color:#000;transform:scaleX(0.9670);font-weight:bold;">Amount</span><div style="left:5.50px;top:48.50px;width:259.38px;height:3px;background:#000;"></div></div>
<div class="c" style="left:3153px;top:391px;width:189px;height:56px;"><span class="t" style="left:5.50px;top:9.55px;font-size:40.70px;color:#000;transform:scaleX(0.8916);font-weight:bold;">Box</span><span class="t" style="left:84.00px;top:9.55px;font-size:40.70px;color:#000;transform:scaleX(0.9856);font-weight:bold;">2</span><span class="t" style="left:116.25px;top:9.55px;font-size:40.70px;color:#000;transform:scaleX(0.9670);font-weight:bold;">Amount</span><div style="left:5.50px;top:48.50px;width:259.38px;height:3px;background:#000;"></div></div>
<div class="c" style="left:3345px;top:391px;width:189px;height:56px;"><span class="t" style="left:5.50px;top:9.55px;font-size:40.70px;color:#000;transform:scaleX(0.8916);font-weight:bold;">Box</span><span class="t" style="left:84.00px;top:9.55px;font-size:40.70px;color:#000;transform:scaleX(0.9856);font-weight:bold;">3</span><span class="t" style="left:116.25px;top:9.55px;font-size:40.70px;color:#000;transform:scaleX(0.9670);font-weight:bold;">Amount</span><div style="left:5.50px;top:48.50px;width:259.38px;height:3px;background:#000;"></div></div>
<div class="c" style="left:3537px;top:391px;width:189px;height:56px;"><span class="t" style="left:5.50px;top:9.55px;font-size:40.70px;color:#000;transform:scaleX(0.8916);font-weight:bold;">Box</span><span class="t" style="left:84.00px;top:9.55px;font-size:40.70px;color:#000;transform:scaleX(0.9856);font-weight:bold;">4</span><span class="t" style="left:116.25px;top:9.55px;font-size:40.70px;color:#000;transform:scaleX(0.9670);font-weight:bold;">Amount</span><div style="left:5.50px;top:48.50px;width:259.38px;height:3px;background:#000;"></div></div>
<div class="c" style="left:3729px;top:391px;width:43px;height:56px;"><span class="t" style="left:5.50px;top:9.55px;font-size:40.70px;color:#000;transform:scaleX(0.8916);font-weight:bold;">Box</span><div style="left:5.50px;top:48.50px;width:259.38px;height:3px;background:#000;"></div></div>
<div class="c" style="left:81px;top:450px;width:189px;height:56px;"><span class="t" style="left:5.50px;top:9.55px;font-size:40.70px;color:#000;transform:scaleX(0.9596);">123-22-1000</span></div>
<div class="c" style="left:81px;top:509px;width:189px;height:56px;"><span class="t" style="left:5.50px;top:9.55px;font-size:40.70px;color:#000;transform:scaleX(0.9596);">123-22-1001</span></div>
<div class="c" style="left:81px;top:568px;width:189px;height:56px;"><span class="t" style="left:5.50px;top:9.55px;font-size:40.70px;color:#000;transform:scaleX(0.9596);">123-22-1002</span></div>
<div class="c" style="left:81px;top:627px;width:189px;height:56px;"><span class="t" style="left:5.50px;top:9.55px;font-size:40.70px;color:#000;transform:scaleX(0.9596);">123-22-1003</span></div>
<div class="c" style="left:81px;top:686px;width:189px;height:56px;"><span class="t" style="left:5.50px;top:9.55px;font-size:40.70px;color:#000;transform:scaleX(0.9596);">123-22-1004</span></div>
<div class="c" style="left:81px;top:745px;width:189px;height:56px;"><span class="t" style="left:5.50px;top:9.55px;font-size:40.70px;color:#000;transform:scaleX(0.9596);">123-22-1005</span></div>
<div class="c" style="left:81px;top:804px;width:189px;height:56px;"><span class="t" style="left:5.50px;top:9.55px;font-size:40.70px;color:#000;transform:scaleX(0.9596);">144-22-1006</span></div>
<div class="c" style="left:81px;top:863px;width:189px;height:56px;"><span class="t" style="left:5.50px;top:9.55px;font-size:40.70px;color:#000;transform:scaleX(0.9596);">555-22-1234</span></div>
<div class="c" style="left:81px;top:922px;width:189px;height:56px;"><span class="t" style="left:5.50px;top:9.55px;font-size:40.70px;color:#000;transform:scaleX(0.9596);">555-33-1234</span></div>
<div class="c" style="left:81px;top:981px;width:189px;height:56px;"><span class="t" style="left:5.50px;top:9.55px;font-size:40.70px;color:#000;transform:scaleX(0.9618);">77-7441234</span></div>
<div class="c" style="left:81px;top:1040px;width:189px;height:56px;"><span class="t" style="left:5.50px;top:9.55px;font-size:40.70px;color:#000;transform:scaleX(0.9618);">77-7441235</span></div>
<div class="c" style="left:81px;top:1099px;width:189px;height:56px;"><span class="t" style="left:5.50px;top:9.55px;font-size:40.70px;color:#000;transform:scaleX(0.9618);">95-1234567</span></div>
<div class="c" style="left:273px;top:450px;width:189px;height:56px;"><span class="t" style="left:5.50px;top:9.55px;font-size:40.70px;color:#000;transform:scaleX(0.9834);">ADAM</span></div>
<div class="c" style="left:273px;top:509px;width:189px;height:56px;"><span class="t" style="left:5.50px;top:9.55px;font-size:40.70px;color:#000;transform:scaleX(0.8465);">BASILE</span></div>
<div class="c" style="left:273px;top:568px;width:189px;height:56px;"><span class="t" style="left:5.50px;top:9.55px;font-size:40.70px;color:#000;transform:scaleX(0.9174);">NORTON</span></div>
<div class="c" style="left:273px;top:627px;width:189px;height:56px;"><span class="t" style="left:5.50px;top:9.55px;font-size:40.70px;color:#000;transform:scaleX(0.9174);">NORTON</span></div>
<div class="c" style="left:273px;top:686px;width:189px;height:56px;"><span class="t" style="left:5.50px;top:9.55px;font-size:40.70px;color:#000;transform:scaleX(0.9045);">YOUNG</span></div>
<div class="c" style="left:273px;top:745px;width:189px;height:56px;"><span class="t" style="left:5.50px;top:9.55px;font-size:40.70px;color:#000;transform:scaleX(0.9266);">BROWN</span></div>
<div class="c" style="left:273px;top:804px;width:189px;height:56px;"><span class="t" style="left:5.50px;top:9.55px;font-size:40.70px;color:#000;transform:scaleX(0.8743);">OSAKI</span></div>
<div class="c" style="left:273px;top:863px;width:189px;height:56px;"><span class="t" style="left:5.50px;top:9.55px;font-size:40.70px;color:#000;transform:scaleX(0.9721);">Tuna</span></div>
<div class="c" style="left:273px;top:922px;width:189px;height:56px;"><span class="t" style="left:5.50px;top:9.55px;font-size:40.70px;color:#000;transform:scaleX(0.9823);">Birch</span></div>
<div class="c" style="left:273px;top:981px;width:381px;height:56px;"><span class="t" style="left:5.50px;top:9.55px;font-size:40.70px;color:#000;transform:scaleX(0.9187);">ACME</span><span class="t" style="left:123.46px;top:9.55px;font-size:40.70px;color:#000;transform:scaleX(1.0001);">Hardware,</span><span class="t" style="left:321.16px;top:9.55px;font-size:40.70px;color:#000;transform:scaleX(0.9739);">Inc.</span></div>
<div class="c" style="left:273px;top:1040px;width:381px;height:56px;"><span class="t" style="left:5.50px;top:9.55px;font-size:40.70px;color:#000;transform:scaleX(0.9540);">5-Star</span><span class="t" style="left:121.18px;top:9.55px;font-size:40.70px;color:#000;transform:scaleX(1.0025);">Software,</span><span class="t" style="left:303.47px;top:9.55px;font-size:40.70px;color:#000;transform:scaleX(0.9739);">Inc.</span></div>
<div class="c" style="left:273px;top:1099px;width:381px;height:56px;"><span class="t" style="left:5.50px;top:9.55px;font-size:40.70px;color:#000;transform:scaleX(1.0184);">Action</span><span class="t" style="left:130.64px;top:9.55px;font-size:40.70px;color:#000;transform:scaleX(1.0029);">Investments</span></div>
<div class="c" style="left:465px;top:450px;width:189px;height:56px;"><span class="t" style="left:5.50px;top:9.55px;font-size:40.70px;color:#000;transform:scaleX(0.8943);">LILLIAN</span></div>
<div class="c" style="left:465px;top:509px;width:189px;height:56px;"><span class="t" style="left:5.50px;top:9.55px;font-size:40.70px;color:#000;transform:scaleX(0.9133);">ANTHONY</span></div>
<div class="c" style="left:465px;top:568px;width:381px;height:56px;"><span class="t" style="left:5.50px;top:9.55px;font-size:40.70px;color:#000;transform:scaleX(0.9176);">DONALD</span><span class="t" style="left:171.07px;top:9.55px;font-size:40.70px;color:#000;transform:scaleX(0.8771);">G</span></div>
<div class="c" style="left:465px;top:627px;width:381px;height:56px;"><span class="t" style="left:5.50px;top:9.55px;font-size:40.70px;color:#000;transform:scaleX(0.8912);">WALLACE</span><span class="t" style="left:187.44px;top:9.55px;font-size:40.70px;color:#000;transform:scaleX(0.8771);">G</span></div>
<div class="c" style="left:465px;top:686px;width:189px;height:56px;"><span class="t" style="left:5.50px;top:9.55px;font-size:40.70px;color:#000;transform:scaleX(0.9417);">MANUEL</span></div>
<div class="c" style="left:465px;top:745px;width:189px;height:56px;"><span class="t" style="left:5.50px;top:9.55px;font-size:40.70px;color:#000;transform:scaleX(0.8755);">JAMES</span></div>
<div class="c" style="left:465px;top:804px;width:189px;height:56px;"><span class="t" style="left:5.50px;top:9.55px;font-size:40.70px;color:#000;transform:scaleX(0.8755);">JAMES</span></div>
<div class="c" style="left:465px;top:863px;width:189px;height:56px;"><span class="t" style="left:5.50px;top:9.55px;font-size:40.70px;color:#000;transform:scaleX(0.9699);">Charlie</span></div>
<div class="c" style="left:465px;top:922px;width:189px;height:56px;"><span class="t" style="left:5.50px;top:9.55px;font-size:40.70px;color:#000;transform:scaleX(0.9606);">Karen</span></div>
<div class="c" style="left:657px;top:804px;width:189px;height:56px;"><span class="t" style="left:5.50px;top:9.55px;font-size:40.70px;color:#000;transform:scaleX(0.8694);">%</span><span class="t" style="left:46.90px;top:9.55px;font-size:40.70px;color:#000;transform:scaleX(0.8594);">JANE</span><span class="t" style="left:146.26px;top:9.55px;font-size:40.70px;color:#000;transform:scaleX(0.8743);">OSAKI</span></div>
<div class="c" style="left:657px;top:922px;width:381px;height:56px;"><span class="t" style="left:5.50px;top:9.55px;font-size:40.70px;color:#000;transform:scaleX(0.9138);">DBA</span><span class="t" style="left:91.92px;top:9.55px;font-size:40.70px;color:#000;transform:scaleX(0.9411);">Ace</span><span class="t" style="left:167.86px;top:9.55px;font-size:40.70px;color:#000;transform:scaleX(0.9908);">Computers</span></div>
<div class="c" style="left:657px;top:981px;width:189px;height:56px;"><span class="t" style="left:5.50px;top:9.55px;font-size:40.70px;color:#000;transform:scaleX(1.0734);">Attn:</span><span class="t" style="left:115.24px;top:9.55px;font-size:40.70px;color:#000;transform:scaleX(0.9968);">Accounting</span></div>
<div class="c" style="left:657px;top:1040px;width:189px;height:56px;"><span class="t" style="left:5.50px;top:9.55px;font-size:40.70px;color:#000;transform:scaleX(0.9644);">Acctg</span><span class="t" style="left:113.61px;top:9.55px;font-size:40.70px;color:#000;transform:scaleX(0.9471);">MS</span><span class="t" style="left:181.37px;top:9.55px;font-size:40.70px;color:#000;transform:scaleX(0.9642);">420</span></div>
<div class="c" style="left:849px;top:450px;width:189px;height:56px;"><span class="t" style="left:5.50px;top:9.55px;font-size:40.70px;color:#000;transform:scaleX(0.9146);">c</span></div>
<div class="c" style="left:849px;top:804px;width:189px;height:56px;"><span class="t" style="left:5.50px;top:9.55px;font-size:40.70px;color:#000;transform:scaleX(1.0245);">o</span></div>
<div class="c" style="left:849px;top:981px;width:189px;height:56px;"><span class="t" style="left:5.50px;top:9.55px;font-size:40.70px;color:#000;transform:scaleX(1.0206);">u</span></div>
<div class="c" style="left:849px;top:1040px;width:189px;height:56px;"><span class="t" style="left:5.50px;top:9.55px;font-size:40.70px;color:#000;transform:scaleX(1.0206);">u</span></div>
<div class="c" style="left:1041px;top:450px;width:381px;height:56px;"><span class="t" style="left:5.50px;top:9.55px;font-size:40.70px;color:#000;transform:scaleX(0.8336);">PINECREST</span><span class="t" style="left:209.62px;top:9.55px;font-size:40.70px;color:#000;transform:scaleX(0.8720);">DRIVE</span><span class="t" style="left:328.02px;top:9.55px;font-size:40.70px;color:#000;transform:scaleX(0.8506);">RFD</span></div>
<div class="c" style="left:1041px;top:509px;width:381px;height:56px;"><span class="t" style="left:5.50px;top:9.55px;font-size:40.70px;color:#000;transform:scaleX(0.9835);">115-86</span><span class="t" style="left:137.10px;top:9.55px;font-size:40.70px;color:#000;transform:scaleX(0.9358);">238TH</span><span class="t" style="left:261.36px;top:9.55px;font-size:40.70px;color:#000;transform:scaleX(0.8004);">ST</span></div>
<div class="c" style="left:1041px;top:568px;width:381px;height:56px;"><span class="t" style="left:5.50px;top:9.55px;font-size:40.70px;color:#000;transform:scaleX(0.9642);">123</span><span class="t" style="left:80.92px;top:9.55px;font-size:40.70px;color:#000;transform:scaleX(0.7910);">E</span><span class="t" style="left:112.33px;top:9.55px;font-size:40.70px;color:#000;transform:scaleX(0.8843);">LAIRD</span><span class="t" style="left:228.27px;top:9.55px;font-size:40.70px;color:#000;transform:scaleX(0.8668);">DR</span></div>
<div class="c" style="left:1041px;top:627px;width:381px;height:56px;"><span class="t" style="left:5.50px;top:9.55px;font-size:40.70px;color:#000;transform:scaleX(0.9642);">730</span><span class="t" style="left:80.92px;top:9.55px;font-size:40.70px;color:#000;transform:scaleX(0.9293);">18TH</span><span class="t" style="left:183.35px;top:9.55px;font-size:40.70px;color:#000;transform:scaleX(0.9169);">AVE</span></div>
<div class="c" style="left:1041px;top:686px;width:381px;height:56px;"><span class="t" style="left:5.50px;top:9.55px;font-size:40.70px;color:#000;transform:scaleX(0.9642);">635</span><span class="t" style="left:80.92px;top:9.55px;font-size:40.70px;color:#000;transform:scaleX(0.9293);">20TH</span><span class="t" style="left:183.35px;top:9.55px;font-size:40.70px;color:#000;transform:scaleX(0.8090);">STREET</span></div>
<div class="c" style="left:1041px;top:745px;width:381px;height:56px;"><span class="t" style="left:5.50px;top:9.55px;font-size:40.70px;color:#000;transform:scaleX(0.9642);">605</span><span class="t" style="left:80.92px;top:9.55px;font-size:40.70px;color:#000;transform:scaleX(0.8479);">SUNSET</span><span class="t" style="left:230.82px;top:9.55px;font-size:40.70px;color:#000;transform:scaleX(0.8668);">DR</span></div>
<div class="c" style="left:1041px;top:804px;width:381px;height:56px;"><span class="t" style="left:5.50px;top:9.55px;font-size:40.70px;color:#000;transform:scaleX(0.9531);">2-1-2</span><span class="t" style="left:106.00px;top:9.55px;font-size:40.70px;color:#000;transform:scaleX(0.8826);">KASU,</span><span class="t" style="left:223.74px;top:9.55px;font-size:40.70px;color:#000;transform:scaleX(0.8951);">CHIYODA-KU</span></div>
<div class="c" style="left:1041px;top:863px;width:189px;height:56px;"><span class="t" style="left:5.50px;top:9.55px;font-size:40.70px;color:#000;transform:scaleX(0.9642);">1000</span><span class="t" style="left:102.74px;top:9.55px;font-size:40.70px;color:#000;transform:scaleX(0.9493);">Ocean</span></div>
<div class="c" style="left:1041px;top:922px;width:381px;height:56px;"><span class="t" style="left:5.50px;top:9.55px;font-size:40.70px;color:#000;transform:scaleX(0.9642);">2535</span><span class="t" style="left:102.74px;top:9.55px;font-size:40.70px;color:#000;transform:scaleX(0.9671);">N</span><span class="t" style="left:141.11px;top:9.55px;font-size:40.70px;color:#000;transform:scaleX(0.9887);">Central</span></div>
<div class="c" style="left:1041px;top:981px;width:189px;height:56px;"><span class="t" style="left:5.50px;top:9.55px;font-size:40.70px;color:#000;transform:scaleX(0.9642);">1250</span><span class="t" style="left:102.74px;top:9.55px;font-size:40.70px;color:#000;transform:scaleX(0.9898);">Broadway</span></div>
<div class="c" style="left:1041px;top:1040px;width:189px;height:56px;"><span class="t" style="left:5.50px;top:9.55px;font-size:40.70px;color:#000;transform:scaleX(0.9642);">125</span><span class="t" style="left:80.92px;top:9.55px;font-size:40.70px;color:#000;transform:scaleX(0.9951);">Bourne</span></div>
<div class="c" style="left:1041px;top:1099px;width:381px;height:56px;"><span class="t" style="left:5.50px;top:9.55px;font-size:40.70px;color:#000;transform:scaleX(0.9642);">123</span><span class="t" style="left:80.92px;top:9.55px;font-size:40.70px;color:#000;transform:scaleX(0.9779);">Stanhope</span><span class="t" style="left:261.27px;top:9.55px;font-size:40.70px;color:#000;transform:scaleX(0.9086);">St</span></div>
<div class="c" style="left:1233px;top:863px;width:189px;height:56px;"><span class="t" style="left:5.50px;top:9.55px;font-size:40.70px;color:#000;transform:scaleX(1.0365);">Apt</span><span class="t" style="left:78.76px;top:9.55px;font-size:40.70px;color:#000;transform:scaleX(0.9642);">2506</span></div>
<div class="c" style="left:1233px;top:981px;width:189px;height:56px;"><span class="t" style="left:5.50px;top:9.55px;font-size:40.70px;color:#000;transform:scaleX(0.9705);">Suite</span><span class="t" style="left:105.47px;top:9.55px;font-size:40.70px;color:#000;transform:scaleX(0.9642);">30</span></div>
<div class="c" style="left:1233px;top:1040px;width:189px;height:56px;"><span class="t" style="left:5.50px;top:9.55px;font-size:40.70px;color:#000;transform:scaleX(0.9705);">Suite</span><span class="t" style="left:105.47px;top:9.55px;font-size:40.70px;color:#000;transform:scaleX(0.9642);">300</span></div>
<div class="c" style="left:1425px;top:450px;width:189px;height:56px;"><span class="t" style="left:5.50px;top:9.55px;font-size:40.70px;color:#000;transform:scaleX(0.8565);">CALGARY</span></div>
<div class="c" style="left:1425px;top:509px;width:189px;height:56px;"><span class="t" style="left:5.50px;top:9.55px;font-size:40.70px;color:#000;transform:scaleX(0.9453);">ORMOND</span></div>
<div class="c" style="left:1425px;top:568px;width:189px;height:56px;"><span class="t" style="left:5.50px;top:9.55px;font-size:40.70px;color:#000;transform:scaleX(0.8916);">FAIR</span><span class="t" style="left:96.10px;top:9.55px;font-size:40.70px;color:#000;transform:scaleX(0.9310);">HAVEN</span></div>
<div class="c" style="left:1425px;top:627px;width:189px;height:56px;"><span class="t" style="left:5.50px;top:9.55px;font-size:40.70px;color:#000;transform:scaleX(0.9070);">BOUNTIFUL</span></div>
<div class="c" style="left:1425px;top:686px;width:189px;height:56px;"><span class="t" style="left:5.50px;top:9.55px;font-size:40.70px;color:#000;transform:scaleX(0.9018);">CLINTON</span></div>
<div class="c" style="left:1425px;top:745px;width:189px;height:56px;"><span class="t" style="left:5.50px;top:9.55px;font-size:40.70px;color:#000;transform:scaleX(0.8423);">SKOKIE</span></div>
<div class="c" style="left:1425px;top:804px;width:189px;height:56px;"><span class="t" style="left:5.50px;top:9.55px;font-size:40.70px;color:#000;transform:scaleX(0.8749);">TOKYO</span></div>
<div class="c" style="left:1425px;top:863px;width:189px;height:56px;"><span class="t" style="left:5.50px;top:9.55px;font-size:40.70px;color:#000;transform:scaleX(0.9420);">Santa</span><span class="t" style="left:115.63px;top:9.55px;font-size:40.70px;color:#000;transform:scaleX(1.0189);">Monica</span></div>
<div class="c" style="left:1425px;top:922px;width:189px;height:56px;"><span class="t" style="left:5.50px;top:9.55px;font-size:40.70px;color:#000;transform:scaleX(0.9801);">Beverly</span><span class="t" style="left:148.46px;top:9.55px;font-size:40.70px;color:#000;transform:scaleX(0.9737);">Hills</span></div>
<div class="c" style="left:1425px;top:981px;width:189px;height:56px;"><span class="t" style="left:5.50px;top:9.55px;font-size:40.70px;color:#000;transform:scaleX(1.0047);">New</span><span class="t" style="left:97.24px;top:9.55px;font-size:40.70px;color:#000;transform:scaleX(1.0006);">York</span></div>
<div class="c" style="left:1425px;top:1040px;width:189px;height:56px;"><span class="t" style="left:5.50px;top:9.55px;font-size:40.70px;color:#000;transform:scaleX(0.9234);">Lake</span><span class="t" style="left:96.93px;top:9.55px;font-size:40.70px;color:#000;transform:scaleX(0.9731);">City</span></div>
<div class="c" style="left:1425px;top:1099px;width:189px;height:56px;"><span class="t" style="left:5.50px;top:9.55px;font-size:40.70px;color:#000;transform:scaleX(0.9959);">Avon</span></div>
<div class="c" style="left:1617px;top:450px;width:189px;height:56px;"><span class="t" style="left:5.50px;top:9.55px;font-size:40.70px;color:#000;transform:scaleX(0.9101);">AB</span></div>
<div class="c" style="left:1617px;top:509px;width:189px;height:56px;"><span class="t" style="left:5.50px;top:9.55px;font-size:40.70px;color:#000;transform:scaleX(0.8143);">FL</span></div>
<div class="c" style="left:1617px;top:568px;width:189px;height:56px;"><span class="t" style="left:5.50px;top:9.55px;font-size:40.70px;color:#000;transform:scaleX(0.8818);">NY</span></div>
<div class="c" style="left:1617px;top:627px;width:189px;height:56px;"><span class="t" style="left:5.50px;top:9.55px;font-size:40.70px;color:#000;transform:scaleX(0.9157);">UT</span></div>
<div class="c" style="left:1617px;top:686px;width:189px;height:56px;"><span class="t" style="left:5.50px;top:9.55px;font-size:40.70px;color:#000;transform:scaleX(0.8712);">IL</span></div>
<div class="c" style="left:1617px;top:745px;width:189px;height:56px;"><span class="t" style="left:5.50px;top:9.55px;font-size:40.70px;color:#000;transform:scaleX(0.8712);">IL</span></div>
<div class="c" style="left:1617px;top:863px;width:189px;height:56px;"><span class="t" style="left:5.50px;top:9.55px;font-size:40.70px;color:#000;transform:scaleX(0.8654);">CA</span></div>
<div class="c" style="left:1617px;top:922px;width:189px;height:56px;"><span class="t" style="left:5.50px;top:9.55px;font-size:40.70px;color:#000;transform:scaleX(0.8654);">CA</span></div>
<div class="c" style="left:1617px;top:981px;width:189px;height:56px;"><span class="t" style="left:5.50px;top:9.55px;font-size:40.70px;color:#000;transform:scaleX(0.8818);">NY</span></div>
<div class="c" style="left:1617px;top:1040px;width:189px;height:56px;"><span class="t" style="left:5.50px;top:9.55px;font-size:40.70px;color:#000;transform:scaleX(1.0435);">MN</span></div>
<div class="c" style="left:1617px;top:1099px;width:189px;height:56px;"><span class="t" style="left:5.50px;top:9.55px;font-size:40.70px;color:#000;transform:scaleX(0.8273);">CT</span></div>
<div class="c" style="left:1809px;top:450px;width:189px;height:56px;"><span class="t" style="left:5.50px;top:9.55px;font-size:40.70px;color:#000;transform:scaleX(0.8842);">T2P</span><span class="t" style="left:81.44px;top:9.55px;font-size:40.70px;color:#000;transform:scaleX(0.9187);">4K9</span></div>
<div class="c" style="left:1809px;top:509px;width:381px;height:56px;"><span class="t" style="left:5.50px;top:9.55px;font-size:40.70px;color:#000;transform:scaleX(0.9618);">32174-1234</span></div>
<div class="c" style="left:1809px;top:568px;width:189px;height:56px;"><span class="t" style="left:5.50px;top:9.55px;font-size:40.70px;color:#000;transform:scaleX(0.9642);">13064</span></div>
<div class="c" style="left:1809px;top:627px;width:189px;height:56px;"><span class="t" style="left:5.50px;top:9.55px;font-size:40.70px;color:#000;transform:scaleX(0.9642);">84010</span></div>
<div class="c" style="left:1809px;top:686px;width:189px;height:56px;"><span class="t" style="left:5.50px;top:9.55px;font-size:40.70px;color:#000;transform:scaleX(0.9642);">61727</span></div>
<div class="c" style="left:1809px;top:745px;width:189px;height:56px;"><span class="t" style="left:5.50px;top:9.55px;font-size:40.70px;color:#000;transform:scaleX(0.9642);">60076</span></div>
<div class="c" style="left:1809px;top:804px;width:189px;height:56px;"><span class="t" style="left:5.50px;top:9.55px;font-size:40.70px;color:#000;transform:scaleX(0.9611);">100-8974</span></div>
<div class="c" style="left:1809px;top:863px;width:189px;height:56px;"><span class="t" style="left:5.50px;top:9.55px;font-size:40.70px;color:#000;transform:scaleX(0.9642);">90402</span></div>
<div class="c" style="left:1809px;top:922px;width:381px;height:56px;"><span class="t" style="left:5.50px;top:9.55px;font-size:40.70px;color:#000;transform:scaleX(0.9618);">90210-3526</span></div>
<div class="c" style="left:1809px;top:981px;width:189px;height:56px;"><span class="t" style="left:5.50px;top:9.55px;font-size:40.70px;color:#000;transform:scaleX(0.9642);">10001</span></div>
<div class="c" style="left:1809px;top:1040px;width:189px;height:56px;"><span class="t" style="left:5.50px;top:9.55px;font-size:40.70px;color:#000;transform:scaleX(0.9642);">55041</span></div>
<div class="c" style="left:1809px;top:1099px;width:189px;height:56px;"><span class="t" style="left:5.50px;top:9.55px;font-size:40.70px;color:#000;transform:scaleX(0.9642);">06001</span></div>
<div class="c" style="left:2001px;top:804px;width:189px;height:56px;"><span class="t" style="left:5.50px;top:9.55px;font-size:40.70px;color:#000;transform:scaleX(0.9064);">JAPAN</span></div>
<div class="c" style="left:2193px;top:450px;width:189px;height:56px;"><span class="t" style="left:5.50px;top:9.55px;font-size:40.70px;color:#000;transform:scaleX(0.9112);">AC-05</span></div>
<div class="c" style="left:2193px;top:509px;width:189px;height:56px;"><span class="t" style="left:5.50px;top:9.55px;font-size:40.70px;color:#000;transform:scaleX(0.9112);">AC-06</span></div>
<div class="c" style="left:2193px;top:568px;width:189px;height:56px;"><span class="t" style="left:5.50px;top:9.55px;font-size:40.70px;color:#000;transform:scaleX(0.9112);">AC-04</span></div>
<div class="c" style="left:2193px;top:627px;width:189px;height:56px;"><span class="t" style="left:5.50px;top:9.55px;font-size:40.70px;color:#000;transform:scaleX(0.9112);">AC-01</span></div>
<div class="c" style="left:2193px;top:686px;width:189px;height:56px;"><span class="t" style="left:5.50px;top:9.55px;font-size:40.70px;color:#000;transform:scaleX(0.9112);">AC-07</span></div>
<div class="c" style="left:2193px;top:745px;width:189px;height:56px;"><span class="t" style="left:5.50px;top:9.55px;font-size:40.70px;color:#000;transform:scaleX(0.9112);">AC-15</span></div>
<div class="c" style="left:2193px;top:804px;width:189px;height:56px;"><span class="t" style="left:5.50px;top:9.55px;font-size:40.70px;color:#000;transform:scaleX(0.9112);">AC-03</span></div>
<div class="c" style="left:2193px;top:863px;width:189px;height:56px;"><span class="t" style="left:5.50px;top:9.55px;font-size:40.70px;color:#000;transform:scaleX(0.9112);">AC-56</span></div>
<div class="c" style="left:2193px;top:922px;width:189px;height:56px;"><span class="t" style="left:5.50px;top:9.55px;font-size:40.70px;color:#000;transform:scaleX(0.9112);">AC-73</span></div>
<div class="c" style="left:2193px;top:981px;width:189px;height:56px;"><span class="t" style="left:5.50px;top:9.55px;font-size:40.70px;color:#000;transform:scaleX(0.9112);">AC-32</span></div>
<div class="c" style="left:2193px;top:1040px;width:189px;height:56px;"><span class="t" style="left:5.50px;top:9.55px;font-size:40.70px;color:#000;transform:scaleX(0.9112);">AC-38</span></div>
<div class="c" style="left:2193px;top:1099px;width:189px;height:56px;"><span class="t" style="left:5.50px;top:9.55px;font-size:40.70px;color:#000;transform:scaleX(0.9112);">AC-02</span></div>
<div class="c" style="left:2385px;top:450px;width:381px;height:56px;"><span class="t" style="left:5.50px;top:9.55px;font-size:40.70px;color:#000;transform:scaleX(1.0024);">lillian.adam@pinecrest.com</span></div>
<div class="c" style="left:2385px;top:863px;width:573px;height:56px;"><span class="t" style="left:5.50px;top:9.55px;font-size:40.70px;color:#000;transform:scaleX(0.9951);">charlie.tuna@ocean.com</span></div>
<div class="c" style="left:2385px;top:922px;width:573px;height:56px;"><span class="t" style="left:5.50px;top:9.55px;font-size:40.70px;color:#000;transform:scaleX(1.0046);">karen.birch@central.com</span></div>
<div class="c" style="left:2577px;top:1099px;width:189px;height:56px;"><span class="t" style="left:161.38px;top:9.55px;font-size:40.70px;color:#000;transform:scaleX(0.9642);">1</span></div>
<div class="c" style="left:2769px;top:450px;width:189px;height:56px;"><span class="t" style="left:5.50px;top:9.55px;font-size:40.70px;color:#000;transform:scaleX(0.9363);">x</span></div>
<div class="c" style="left:2769px;top:568px;width:189px;height:56px;"><span class="t" style="left:5.50px;top:9.55px;font-size:40.70px;color:#000;transform:scaleX(0.8412);">X</span></div>
<div class="c" style="left:2769px;top:745px;width:189px;height:56px;"><span class="t" style="left:5.50px;top:9.55px;font-size:40.70px;color:#000;transform:scaleX(0.8412);">X</span></div>
<div class="c" style="left:2769px;top:804px;width:189px;height:56px;"><span class="t" style="left:5.50px;top:9.55px;font-size:40.70px;color:#000;transform:scaleX(0.8412);">X</span></div>
<div class="c" style="left:2769px;top:981px;width:189px;height:56px;"><span class="t" style="left:5.50px;top:9.55px;font-size:40.70px;color:#000;transform:scaleX(0.8412);">X</span></div>
<div class="c" style="left:2769px;top:1099px;width:189px;height:56px;"><span class="t" style="left:5.50px;top:9.55px;font-size:40.70px;color:#000;transform:scaleX(0.8412);">X</span></div>
<div class="c" style="left:2961px;top:450px;width:189px;height:56px;"><span class="t" style="left:117.73px;top:9.55px;font-size:40.70px;color:#000;transform:scaleX(0.9642);">780</span></div>
<div class="c" style="left:2961px;top:509px;width:189px;height:56px;"><span class="t" style="left:95.90px;top:9.55px;font-size:40.70px;color:#000;transform:scaleX(0.9642);">1780</span></div>
<div class="c" style="left:2961px;top:568px;width:189px;height:56px;"><span class="t" style="left:95.90px;top:9.55px;font-size:40.70px;color:#000;transform:scaleX(0.9642);">1256</span></div>
<div class="c" style="left:2961px;top:627px;width:189px;height:56px;"><span class="t" style="left:117.73px;top:9.55px;font-size:40.70px;color:#000;transform:scaleX(0.9642);">256</span></div>
<div class="c" style="left:2961px;top:686px;width:189px;height:56px;"><span class="t" style="left:62.99px;top:9.55px;font-size:40.70px;color:#000;transform:scaleX(0.9657);">750.08</span></div>
<div class="c" style="left:2961px;top:745px;width:189px;height:56px;"><span class="t" style="left:41.17px;top:9.55px;font-size:40.70px;color:#000;transform:scaleX(0.9655);">1045.32</span></div>
<div class="c" style="left:2961px;top:804px;width:189px;height:56px;"><span class="t" style="left:117.73px;top:9.55px;font-size:40.70px;color:#000;transform:scaleX(0.9642);">428</span></div>
<div class="c" style="left:2961px;top:863px;width:189px;height:56px;"><span class="t" style="left:95.90px;top:9.55px;font-size:40.70px;color:#000;transform:scaleX(0.9642);">1464</span></div>
<div class="c" style="left:2961px;top:922px;width:189px;height:56px;"><span class="t" style="left:117.73px;top:9.55px;font-size:40.70px;color:#000;transform:scaleX(0.9642);">700</span></div>
<div class="c" style="left:2961px;top:981px;width:189px;height:56px;"><span class="t" style="left:62.99px;top:9.55px;font-size:40.70px;color:#000;transform:scaleX(0.9657);">645.28</span></div>
<div class="c" style="left:2961px;top:1040px;width:189px;height:56px;"><span class="t" style="left:117.73px;top:9.55px;font-size:40.70px;color:#000;transform:scaleX(0.9642);">750</span></div>
<div class="c" style="left:2961px;top:1099px;width:189px;height:56px;"><span class="t" style="left:62.99px;top:9.55px;font-size:40.70px;color:#000;transform:scaleX(0.9657);">145.32</span></div>
<div class="c" style="left:3153px;top:568px;width:189px;height:56px;"><span class="t" style="left:74.08px;top:9.55px;font-size:40.70px;color:#000;transform:scaleX(0.9642);">10000</span></div>
<div class="c" style="left:3345px;top:568px;width:189px;height:56px;"><span class="t" style="left:74.08px;top:9.55px;font-size:40.70px;color:#000;transform:scaleX(0.9642);">14000</span></div>
<div class="c" style="left:3537px;top:568px;width:189px;height:56px;"><span class="t" style="left:74.08px;top:9.55px;font-size:40.70px;color:#000;transform:scaleX(0.9642);">16000</span></div>
<div class="c" style="left:3153px;top:627px;width:189px;height:56px;"><span class="t" style="left:95.90px;top:9.55px;font-size:40.70px;color:#000;transform:scaleX(0.9642);">7000</span></div>
<div class="c" style="left:3345px;top:627px;width:189px;height:56px;"><span class="t" style="left:74.08px;top:9.55px;font-size:40.70px;color:#000;transform:scaleX(0.9642);">10000</span></div>
<div class="c" style="left:3537px;top:627px;width:189px;height:56px;"><span class="t" style="left:74.08px;top:9.55px;font-size:40.70px;color:#000;transform:scaleX(0.9642);">20000</span></div>
<div class="c" style="left:3153px;top:804px;width:189px;height:56px;"><span class="t" style="left:41.17px;top:9.55px;font-size:40.70px;color:#000;transform:scaleX(0.9655);">1000.01</span></div>
<div class="c" style="left:3345px;top:804px;width:189px;height:56px;"><span class="t" style="left:41.17px;top:9.55px;font-size:40.70px;color:#000;transform:scaleX(0.9655);">3499.99</span></div>
<div class="c" style="left:3537px;top:804px;width:189px;height:56px;"><span class="t" style="left:41.17px;top:9.55px;font-size:40.70px;color:#000;transform:scaleX(0.9655);">3499.99</span></div>
<div class="c" style="left:3153px;top:1099px;width:189px;height:56px;"><span class="t" style="left:41.17px;top:9.55px;font-size:40.70px;color:#000;transform:scaleX(0.9655);">1999.99</span></div>
<div class="c" style="left:3345px;top:1099px;width:189px;height:56px;"><span class="t" style="left:41.17px;top:9.55px;font-size:40.70px;color:#000;transform:scaleX(0.9655);">2500.01</span></div>
<div class="c" style="left:3537px;top:1099px;width:189px;height:56px;"><span class="t" style="left:62.99px;top:9.55px;font-size:40.70px;color:#000;transform:scaleX(0.9657);">500.01</span></div>
<div class="c" style="left:3729px;top:804px;width:43px;height:56px;"><span class="t" style="left:41.17px;top:9.55px;font-size:40.70px;color:#000;transform:scaleX(0.9655);">4000.55</span></div>
<svg style="left:1809px;top:1099px" width="16" height="16"><polygon points="0,0 14,0 0,14" fill="#107c41"/></svg>
<div style="left:3593px;top:1167px;width:178px;height:67px;background:#fdfdfd;border:1px solid #ababab;"></div>
<svg style="left:3593px;top:1167px" width="178" height="67" viewBox="3593 1167 178 67" fill="none">
<path d="M3616,1184.5 H3610 V1222 H3626" stroke="#e06c00" stroke-width="3"/><path d="M3634,1184.5 H3642 V1194" stroke="#e06c00" stroke-width="3"/>
<rect x="3612" y="1186" width="14" height="34" fill="#fbe3b0"/>
<path d="M3616.5,1192 V1184 H3621 A5,5 0 0 1 3631,1184 H3636.5 V1192 Z" stroke="#8a8a8a" stroke-width="3" fill="#fdfdfd"/>
<rect x="3631.5" y="1199.5" width="17" height="23" stroke="#444" stroke-width="3" fill="#fdfdfd"/>
<polygon points="3745,1196 3761,1196 3753,1204" fill="#444"/>
</svg>
<span class="t" style="left:3655.50px;top:1186.39px;font-size:38.52px;color:#444;transform:scaleX(0.8592);">(Ctrl)</span>
<div style="left:1419px;top:1447px;width:201px;height:68px;border:6px solid #217346;"></div>
<div style="left:1605px;top:1500px;width:18px;height:18px;background:#fff;"></div>
<div style="left:1608px;top:1503px;width:15px;height:15px;background:#217346;"></div>
<div style="left:3772px;top:388px;width:3px;height:1505px;background:#9b9b9b;"></div>
<div style="left:0px;top:1890px;width:3840px;height:150px;background:#e6e6e6;"></div>
<div style="left:0px;top:1890px;width:3775px;height:3px;background:#9b9b9b;"></div>
<div style="left:3776px;top:1780px;width:64px;height:120px;background:#e6e6e6;"></div>
<div style="left:3784px;top:383px;width:49px;height:1462px;background:#dadada;"></div>
<div style="left:3784px;top:334px;width:49px;height:48px;background:#fff;border:3px solid #737373;"></div>
<div style="left:3784px;top:383px;width:49px;height:1401px;background:#fff;border:3px solid #737373;"></div>
<div style="left:3784px;top:1844px;width:49px;height:49px;background:#fff;border:3px solid #737373;"></div>
<svg style="left:3784px;top:330px" width="49" height="1570" viewBox="3784 330 49 1570"><polygon points="3797,364.5 3820,364.5 3808.5,352.5" fill="#777"/><polygon points="3797,1863 3820,1863 3808.5,1875" fill="#777"/></svg>
<div style="left:0px;top:1974px;width:3840px;height:3px;background:#c8c6c4;"></div>
<div style="left:0px;top:1977px;width:3840px;height:63px;background:#f3f2f1;"></div>
<div style="left:300px;top:1890px;width:204px;height:69px;background:#fff;border-left:3px solid #9b9b9b;border-right:3px solid #9b9b9b;"></div>
<div style="left:300px;top:1959px;width:204px;height:6px;background:#217346;"></div>
<span class="t" style="left:335.00px;top:1906.20px;font-size:40.41px;color:#217346;transform:scaleX(0.9321);font-weight:bold;">Sheet1</span>
<span class="t" style="left:544.20px;top:1909.71px;font-size:37.79px;color:#444;transform:scaleX(1.0102);">1099-MISC</span>
<span class="t" style="left:820.50px;top:1909.71px;font-size:37.79px;color:#444;transform:scaleX(0.9230);">Key</span>
<div style="left:779px;top:1902px;width:3px;height:60px;background:#9b9b9b;"></div>
<div style="left:918px;top:1902px;width:3px;height:60px;background:#9b9b9b;"></div>
<svg style="left:0;top:1893px" width="3840" height="147" viewBox="0 1893 3840 147" fill="none">
<polygon points="95,1923 95,1942 84.5,1932.5" fill="#c0c0c0"/><polygon points="169.7,1923 169.7,1942 180.2,1932.5" fill="#c0c0c0"/>
<circle cx="1046" cy="1932.3" r="23" stroke="#8a8a8a" stroke-width="2.5"/><path d="M1033.5,1932.3 H1058.5 M1046,1919.8 V1944.8" stroke="#8a8a8a" stroke-width="7"/>
<polygon points="2381,1923 2381,1943 2366.5,1933" fill="#777"/><polygon points="3746,1923 3746,1943 3760.5,1933" fill="#777"/>
</svg>
<div style="left:2302px;top:1916px;width:6px;height:6px;background:#b5b5b5;"></div>
<div style="left:2302px;top:1928px;width:6px;height:6px;background:#b5b5b5;"></div>
<div style="left:2302px;top:1940.5px;width:6px;height:6px;background:#b5b5b5;"></div>
<div style="left:2349px;top:1908px;width:1428px;height:49px;background:#dadada;"></div>
<div style="left:2349px;top:1908px;width:48px;height:49px;background:#fff;border:3px solid #737373;"></div>
<div style="left:2396px;top:1908px;width:658px;height:49px;background:#fff;border:3px solid #737373;"></div>
<div style="left:3728px;top:1908px;width:49px;height:49px;background:#fff;border:3px solid #737373;"></div>
<svg style="left:2349px;top:1908px" width="1428" height="49" viewBox="2349 1908 1428 49"><polygon points="2381,1922.5 2381,1943.5 2366.5,1933" fill="#777"/><polygon points="3746,1922.5 3746,1943.5 3760.5,1933" fill="#777"/></svg>
<span class="t" style="left:21.90px;top:1994.36px;font-size:30.52px;color:#444;transform:scaleX(1.0105);">Select destination and press ENTER or choose Paste</span>
<div style="left:2948px;top:1977px;width:120px;height:63px;background:#d2d0ce;"></div>
<svg style="left:2900px;top:1977px" width="940" height="63" viewBox="2900 1977 940 63" fill="none" stroke="#444" stroke-width="3">
<rect x="2988.5" y="1988.5" width="36" height="36"/><path d="M3000.5,1988 V2025 M3012.5,1988 V2025 M2988,2000.5 H3025 M2988,2012.5 H3025"/>
<rect x="3108.5" y="1988.5" width="39" height="36"/><rect x="3117.5" y="1995.5" width="21" height="22"/><path d="M3122,2001.5 H3134 M3122,2006.5 H3134 M3122,2011.5 H3134" stroke-width="2.5"/>
<rect x="3228" y="1988.5" width="39" height="36"/><path d="M3228,2008.5 H3253.5 V1988 M3241,1988 V2008"/>
<path d="M3326,2007.5 H3349" stroke-width="2"/><path d="M3366,2007.5 H3664"/><path d="M3680,2007.5 H3703 M3691.5,1996 V2019" stroke-width="2"/>
<rect x="3508" y="1992" width="15" height="33" fill="#3b3a39" stroke="none"/>
</svg>
<span class="t" style="left:3743.70px;top:1994.53px;font-size:31.98px;color:#444;transform:scaleX(0.8961);">100%</span>
<div style="left:274px;top:1854px;width:258px;height:155px;border:11px solid #632289;border-radius:23px;box-shadow:2px 3px 5px rgba(0,0,0,.45), inset 2px 3px 5px rgba(0,0,0,.45);"></div>
</body></html>
